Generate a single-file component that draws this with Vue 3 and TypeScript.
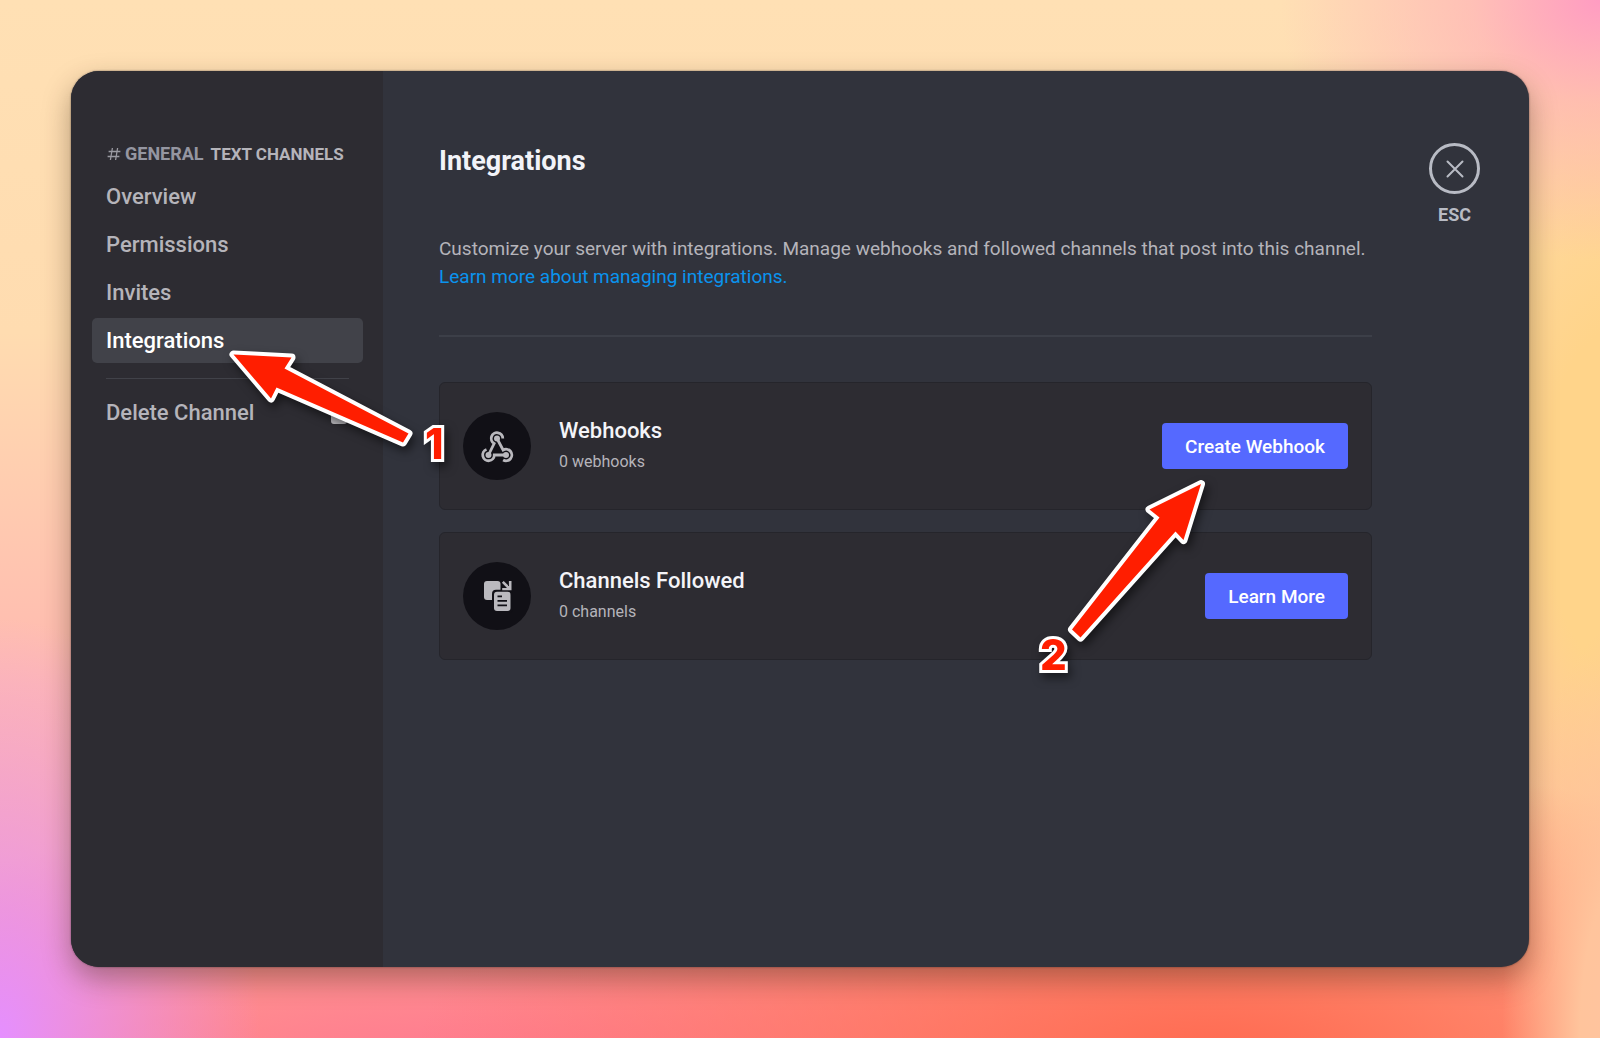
<script setup lang="ts">
interface NavItem {
  label: string
  active?: boolean
}

interface Integration {
  id: 'webhook' | 'follow'
  title: string
  detail: string
  action: string
}

const navItems: NavItem[] = [
  { label: 'Overview' },
  { label: 'Permissions' },
  { label: 'Invites' },
  { label: 'Integrations', active: true },
]

const integrations: Integration[] = [
  { id: 'webhook', title: 'Webhooks', detail: '0 webhooks', action: 'Create Webhook' },
  { id: 'follow', title: 'Channels Followed', detail: '0 channels', action: 'Learn More' },
]
</script>

<template>
  <div class="backdrop">
    <div class="window">
      <aside class="sidebar">
        <h2 class="channel">
          <svg class="hash" viewBox="0 0 14 14" aria-hidden="true">
            <path d="M5.4 1 3.4 13M10.6 1 8.6 13M1.6 4.5H13.4M.6 9.5H12.4" />
          </svg>
          <span class="channel-name">GENERAL</span>
          <span>TEXT CHANNELS</span>
        </h2>
        <nav class="nav">
          <a
            v-for="item in navItems"
            :key="item.label"
            href="#"
            class="nav-item"
            :class="{ active: item.active }"
          >{{ item.label }}</a>
        </nav>
        <hr class="nav-rule" />
        <button type="button" class="nav-item delete">
          Delete Channel
          <svg class="trash" viewBox="0 0 20 22" aria-hidden="true">
            <path d="M7 0H13V2H20V5H0V2H7ZM2 7H18V19Q18 22 15 22H5Q2 22 2 19Z" />
          </svg>
        </button>
      </aside>

      <main class="content">
        <div class="column">
          <h1 class="title">Integrations</h1>
          <p class="intro">
            Customize your server with integrations. Manage webhooks and followed channels that post into this channel.
            <a href="#" class="link">Learn more about managing integrations.</a>
          </p>
          <hr class="rule" />
          <section class="cards">
            <article v-for="entry in integrations" :key="entry.id" class="card">
              <div class="badge">
                <svg v-if="entry.id === 'webhook'" class="glyph" viewBox="0 0 34 34" aria-hidden="true">
                  <g fill="none" stroke="currentColor" stroke-width="2.8">
                    <path d="M22.8 9.5A5.8 5.8 0 1 0 14.1 14.5L8.5 26" />
                    <path d="M17 9.5 23.1 21A5.8 5.8 0 1 1 23.1 31" />
                    <path d="M26 26H14.3A5.8 5.8 0 1 1 6.5 20.5" />
                  </g>
                  <g fill="currentColor">
                    <circle cx="17" cy="9.5" r="3" />
                    <circle cx="8.5" cy="26" r="3" />
                    <circle cx="26" cy="26" r="3" />
                  </g>
                </svg>
                <svg v-else class="glyph" viewBox="0 0 34 34" aria-hidden="true">
                  <rect x="4" y="2" width="16.5" height="19" rx="3" fill="currentColor" />
                  <rect x="12" y="10.7" width="20.5" height="23.3" rx="4" fill="#111016" />
                  <rect x="14" y="12.7" width="16.5" height="19.3" rx="3" fill="currentColor" />
                  <path d="M17.5 17.4H22M17.5 21.9H27M17.5 26.4H27" stroke="#111016" stroke-width="1.8" />
                  <path d="M31.5 2V11.3H22.2V8.9H27L21.9 3.8 23.7 2 28.9 7.1V2Z" fill="currentColor" />
                </svg>
              </div>
              <div class="text">
                <h3 class="card-title">{{ entry.title }}</h3>
                <p class="card-detail">{{ entry.detail }}</p>
              </div>
              <button type="button" class="action">{{ entry.action }}</button>
            </article>
          </section>
        </div>
        <button type="button" class="close">
          <span class="ring">
            <svg viewBox="0 0 18 18" aria-hidden="true"><path d="M1.5 1.5 16.5 16.5M16.5 1.5 1.5 16.5" /></svg>
          </span>
          <span>ESC</span>
        </button>
      </main>

      <svg class="callout first" viewBox="0 0 230 130" aria-hidden="true">
        <path d="M12.5 13.5 70.5 16.5 63.5 27.5 187.5 92.5 182 101.5 55.5 46.5 50 57.5Z" />
        <text x="204" y="118">1</text>
      </svg>
      <svg class="callout second" viewBox="0 0 190 220" aria-hidden="true">
        <path d="M171 14 119.5 39.5 129.5 47.5 42 159.5 50.5 167.5 145.5 61.5 153.5 70Z" />
        <text x="10" y="200">2</text>
      </svg>
    </div>
  </div>
</template>

<style>
body {
  margin: 0;
}
</style>

<style scoped>
.backdrop {
  box-sizing: border-box;
  min-height: 100vh;
  padding: 71px;
  display: flex;
  font-family: Roboto, "Noto Sans", sans-serif;
  color: #b5b4ba;
  background:
    radial-gradient(ellipse 320px 260px at 100% 0%, #ff9cc2 0, #ffa8b890 40%, #ffb4b000 100%),
    radial-gradient(ellipse 260px 420px at 0% 100%, #e58fff 0, #e58fff00 100%),
    radial-gradient(ellipse 130px 420px at 102% 100%, #ffc4a0 0, #ffc49c 40%, #ffc49c00 100%),
    radial-gradient(ellipse 800px 300px at 76% 102%, #ff6a50 0, #ff6a5000 100%),
    radial-gradient(ellipse 900px 260px at 30% 104%, #ff7690 0, #ff769000 100%),
    radial-gradient(ellipse 240px 560px at 101% 48%, #ffd48a 0 30%, #ffd48a00 100%),
    linear-gradient(180deg, #ffe0b4 0%, #ffdcb0 32%, #ffb9b0 66%, #ffa98c 100%);
}

.window {
  position: relative;
  flex: 1;
  display: flex;
  min-width: 0;
  border-radius: 28px;
  background: #31333c;
  box-shadow: 0 12px 28px rgba(60, 40, 20, 0.4), 0 0 2px rgba(20, 20, 30, 0.6);
}

.sidebar {
  box-sizing: border-box;
  flex: none;
  width: 312px;
  padding: 72px 20px 20px 21px;
  border-radius: 28px 0 0 28px;
  background: #2d2c32;
}

.channel {
  display: flex;
  align-items: center;
  margin: 0 0 9px;
  padding-left: 15px;
  font-size: 17px;
  line-height: 22px;
  font-weight: 700;
  white-space: nowrap;
}

.hash {
  width: 14px;
  height: 14px;
  margin-right: 4px;
  fill: none;
  stroke: #9a9aa2;
  stroke-width: 1.3;
}

.channel-name {
  margin-right: 7px;
  color: #9596a1;
  font-size: 18px;
}

.nav {
  display: flex;
  flex-direction: column;
  gap: 3px;
}

.nav-item {
  box-sizing: border-box;
  display: flex;
  align-items: center;
  width: 100%;
  height: 45px;
  padding: 0 14px;
  border: 0;
  border-radius: 5px;
  background: none;
  color: #b5b4ba;
  font: inherit;
  font-size: 22px;
  font-weight: 500;
  text-decoration: none;
}

.nav-item.active {
  background: #414249;
  color: #fff;
}

.nav-rule {
  height: 1px;
  margin: 15px 14px 11px;
  border: 0;
  background: #414249;
}

.delete {
  justify-content: space-between;
}

.trash {
  width: 20px;
  height: 22px;
  fill: #c1c0c5;
}

.content {
  flex: 1;
  display: flex;
  align-items: flex-start;
  justify-content: space-between;
  min-width: 0;
  padding: 72px 49px 0 56px;
}

.column {
  flex: 1;
  max-width: 933px;
}

.title {
  margin: 0;
  color: #f2f3f8;
  font-size: 27px;
  line-height: 36px;
  font-weight: 700;
}

.intro {
  margin: 56px 0 0;
  font-size: 19px;
  line-height: 28px;
}

.link {
  display: block;
  color: #0a93ee;
  text-decoration: none;
}

.rule {
  height: 2px;
  margin: 44px 0 45px;
  border: 0;
  background: #3c3f48;
}

.cards {
  display: flex;
  flex-direction: column;
  gap: 22px;
}

.card {
  display: flex;
  align-items: center;
  padding: 29px 23px;
  border: 1px solid #25252b;
  border-radius: 6px;
  background: #2d2c32;
}

.badge {
  display: grid;
  place-items: center;
  flex: none;
  width: 68px;
  height: 68px;
  margin-right: 28px;
  border-radius: 50%;
  background: #111016;
  color: #bab9be;
}

.glyph {
  width: 34px;
  height: 34px;
}

.text {
  flex: 1;
}

.card-title {
  margin: 0;
  color: #f4f4f8;
  font-size: 22px;
  line-height: 32px;
  font-weight: 500;
}

.card-detail {
  margin: 0;
  font-size: 16px;
  line-height: 30px;
}

.action {
  height: 46px;
  padding: 0 23px;
  border: 0;
  border-radius: 4px;
  background: #5569ff;
  color: #fff;
  font: inherit;
  font-size: 19px;
  font-weight: 500;
}

.close {
  display: flex;
  flex-direction: column;
  align-items: center;
  gap: 10px;
  padding: 0;
  border: 0;
  background: none;
  color: #b8bbc4;
  font: inherit;
  font-size: 18px;
  line-height: 22px;
  font-weight: 700;
}

.ring {
  box-sizing: border-box;
  display: grid;
  place-items: center;
  width: 51px;
  height: 51px;
  border: 3px solid #b8bbc4;
  border-radius: 50%;
}

.ring svg {
  width: 18px;
  height: 18px;
  fill: none;
  stroke: currentColor;
  stroke-width: 2;
  stroke-linecap: round;
}

.callout {
  position: absolute;
  overflow: visible;
  pointer-events: none;
  filter: drop-shadow(3px 5px 5px rgba(0, 0, 0, 0.5));
  fill: #ff1e00;
  stroke: #fff;
  stroke-width: 8px;
  stroke-linejoin: round;
  paint-order: stroke;
  font-family: Inter, sans-serif;
  font-size: 42px;
  font-weight: 800;
}

.callout text {
  stroke-width: 6px;
  stroke-linejoin: miter;
}

.first {
  top: 270px;
  left: 150px;
  width: 230px;
  height: 130px;
}

.second {
  top: 399px;
  right: 309px;
  width: 190px;
  height: 220px;
}
</style>
